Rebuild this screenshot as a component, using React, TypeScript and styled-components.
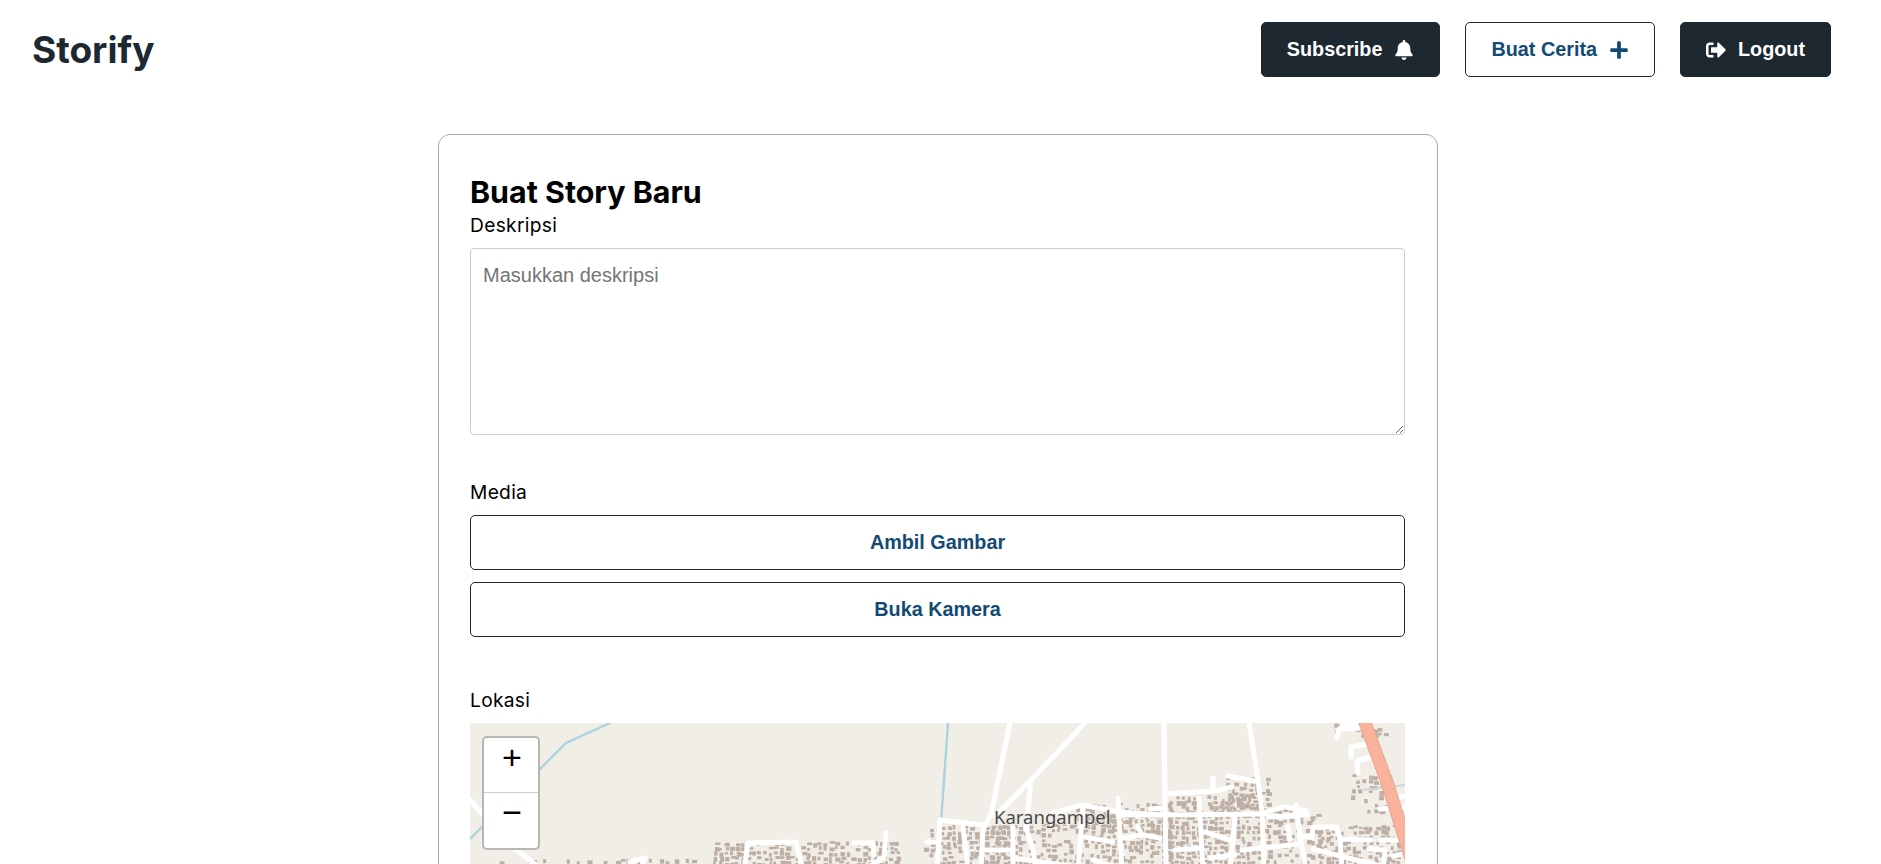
import React, { useMemo } from 'react'
import styled, { createGlobalStyle } from 'styled-components'
import { FaBell, FaPlus, FaSignOutAlt } from 'react-icons/fa'

const GlobalStyle = createGlobalStyle`
  * {
    box-sizing: border-box;
  }
  html {
    overflow: hidden;
  }
  body {
    margin: 0;
    background: #ffffff;
    color: #000000;
    font-family: Inter, "Liberation Sans", sans-serif;
  }
`

const Header = styled.header`
  display: flex;
  align-items: center;
  justify-content: space-between;
  height: 99px;
  padding: 0 50px 0 32px;
`

const Brand = styled.a`
  font-family: Inter, sans-serif;
  font-size: 37px;
  font-weight: 700;
  color: #1d2830;
  margin-top: -1px;
`

const Nav = styled.nav`
  display: flex;
  gap: 25px;
`

const Button = styled.button<{ $outline?: boolean; $block?: boolean }>`
  display: flex;
  align-items: center;
  justify-content: center;
  gap: 12px;
  height: 55px;
  width: ${p => (p.$block ? '100%' : 'auto')};
  padding: 0 25px;
  border: 1px solid #1d2830;
  border-radius: 5px;
  background: ${p => (p.$outline ? '#ffffff' : '#1d2830')};
  color: ${p => (p.$outline ? '#134a74' : '#ffffff')};
  font-family: "Liberation Sans", Arial, sans-serif;
  font-size: 19.8px;
  font-weight: 700;

  svg {
    width: auto;
    height: 20px;
  }
`

const Main = styled.main`
  display: flex;
  justify-content: center;
  padding: 35px 5px 40px 0;
`

const Card = styled.section`
  width: 1000px;
  padding: 39px 32px 40px 31px;
  border: 1px solid #aaaaaa;
  border-radius: 12px;
`

const Title = styled.h1`
  margin: 0 0 4px;
  font-size: 30.4px;
  line-height: 36px;
  font-weight: 700;
`

const Field = styled.div<{ $gap?: number }>`
  display: flex;
  flex-direction: column;
  margin-bottom: ${p => p.$gap ?? 46}px;
`

const Label = styled.label`
  font-size: 19.2px;
  letter-spacing: 0.3px;
  line-height: 22px;
  margin-bottom: 12px;
`

const Textarea = styled.textarea`
  display: block;
  width: 100%;
  height: 187px;
  padding: 15px 12px;
  border: 1px solid #cccccc;
  border-radius: 4px;
  resize: vertical;
  outline: none;
  font-family: "Liberation Sans", Arial, sans-serif;
  font-size: 20px;
  &::placeholder {
    color: #757575;
  }
`

const ButtonStack = styled.div`
  display: flex;
  flex-direction: column;
  gap: 12px;
`

const MapFrame = styled.div`
  position: relative;
  height: 400px;
  overflow: hidden;
  background: #f1eee8;
`

const MapArt = styled.svg`
  display: block;
  width: 100%;
  height: 100%;
`

const ZoomControl = styled.div`
  position: absolute;
  top: 13px;
  left: 12px;
  width: 58px;
  border: 2px solid #b9b6b1;
  border-radius: 5px;
  background: #ffffff;
  overflow: hidden;
`

const ZoomButton = styled.div<{ $last?: boolean }>`
  height: 55px;
  padding-left: 2px;
  border-bottom: ${p => (p.$last ? 'none' : '1px solid #cccccc')};
  text-align: center;
  font-family: "Liberation Mono", monospace;
  font-size: 34px;
  line-height: 44px;
  color: #000000;
`

// page position of the map's top left corner, the roads below were read off the page
const OX = 470
const OY = 723

type Zone = [number, number, number, number, number]

const zones: Zone[] = [
  [500, 860, 706, 870, 0.4],
  [714, 842, 900, 870, 0.78],
  [925, 828, 938, 870, 0.6],
  [942, 826, 1012, 870, 0.84],
  [985, 826, 1032, 870, 0.76],
  [1036, 824, 1085, 870, 0.55],
  [1075, 804, 1170, 830, 0.78],
  [1085, 815, 1170, 870, 0.84],
  [1170, 796, 1262, 870, 0.9],
  [1222, 778, 1268, 815, 0.8],
  [1262, 810, 1320, 870, 0.6],
  [1320, 826, 1400, 870, 0.84],
  [1352, 775, 1395, 815, 0.6],
  [1335, 724, 1385, 735, 0.38],
]

const roads: [number, number][][] = [
  [[470, 800], [483, 815], [514, 848], [540, 868]],
  [[1010, 723], [991, 814], [983, 830], [981, 870]],
  [[1085, 723], [1033, 778], [995, 816]],
  [[1031, 780], [1026, 828], [1033, 849], [1036, 870]],
  [[1164, 723], [1165, 800], [1166, 870]],
  [[1165, 794], [1215, 791], [1232, 787]],
  [[1213, 778], [1213, 791]],
  [[1228, 776], [1255, 781]],
  [[1249, 723], [1258, 780], [1262, 812], [1264, 870]],
  [[1118, 815], [1164, 815], [1266, 814]],
  [[1150, 809], [1164, 808]],
  [[1199, 798], [1203, 870]],
  [[1235, 817], [1230, 870]],
  [[1266, 812], [1284, 807]],
  [[1296, 805], [1300, 836], [1306, 870]],
  [[1269, 817], [1308, 815]],
  [[1286, 807], [1306, 811]],
  [[1288, 827], [1290, 840]],
  [[1242, 850], [1300, 844]],
  [[1312, 837], [1313, 827], [1337, 827], [1340, 839], [1371, 840]],
  [[1300, 836], [1312, 837]],
  [[1340, 839], [1342, 870]],
  [[1313, 849], [1340, 856], [1381, 866]],
  [[1381, 840], [1400, 840]],
  [[1369, 849], [1385, 850], [1383, 870]],
  [[1393, 856], [1408, 853]],
  [[1380, 809], [1405, 807]],
  [[1398, 798], [1408, 795]],
  [[1337, 737], [1339, 729], [1364, 728]],
  [[1343, 724], [1364, 725]],
  [[1351, 757], [1351, 747], [1368, 744]],
  [[1358, 773], [1357, 761], [1371, 757]],
  [[940, 820], [982, 825]],
  [[940, 820], [937, 870]],
  [[927, 842], [938, 842]],
  [[983, 850], [1013, 850]],
  [[1013, 827], [1013, 870]],
  [[963, 827], [968, 870]],
  [[1053, 813], [1082, 805], [1120, 812], [1160, 815]],
  [[1083, 807], [1078, 870]],
  [[1118, 798], [1120, 837], [1122, 870]],
  [[1085, 837], [1113, 842]],
  [[1123, 838], [1143, 835], [1160, 838]],
  [[1138, 827], [1142, 835]],
  [[1013, 858], [1070, 866]],
  [[1093, 860], [1113, 866]],
  [[1175, 850], [1199, 848]],
  [[1205, 832], [1230, 840]],
  [[1210, 858], [1235, 855]],
  [[749, 843], [796, 842]],
  [[748, 843], [744, 870]],
  [[796, 843], [803, 870]],
  [[854, 843], [873, 843], [874, 855]],
  [[886, 833], [884, 857], [870, 866]],
  [[630, 862], [645, 858], [640, 870]],
]

const toPoints = (line: [number, number][]) =>
  line.map(([x, y]) => `${x - OX},${y - OY}`).join(' ')

const makeBuildings = () => {
  // small fixed generator, so the houses stay put between runs
  let seed = 41
  const next = () => {
    seed = (seed * 16807) % 2147483647
    return seed / 2147483647
  }
  const out: { x: number; y: number; w: number; h: number }[] = []
  zones.forEach(([x0, y0, x1, y1, density]) => {
    for (let y = y0; y < y1; y += 5) {
      for (let x = x0; x < x1; x += 5.5) {
        if (next() < density) {
          out.push({
            x: x - OX + next() * 2.6 - 1.3,
            y: y - OY + next() * 2.6 - 1.3,
            w: 2.6 + next() * 2.8,
            h: 2.4 + next() * 2.4,
          })
        }
      }
    }
  })
  return out
}

const MapTiles = () => {
  const buildings = useMemo(makeBuildings, [])
  return (
    <MapArt viewBox="0 0 935 400" preserveAspectRatio="xMinYMin slice">
      <defs>
        <filter id="tile-blur">
          <feGaussianBlur stdDeviation="0.7" />
        </filter>
      </defs>
      <g filter="url(#tile-blur)">
        <polyline points={toPoints([[470, 839], [566, 743], [610, 723]])} fill="none" stroke="#aad3df" strokeWidth="2.4" />
        <polyline points={toPoints([[948, 723], [941, 823]])} fill="none" stroke="#aad3df" strokeWidth="2.4" />
        {buildings.map((b, i) => (
          <rect key={i} x={b.x} y={b.y} width={b.w} height={b.h} fill="#bdafa5" />
        ))}
        <polyline points={toPoints([[1361, 790], [1405, 785]])} fill="none" stroke="#d3d6d6" strokeWidth="2" />
        {roads.map((line, i) => (
          <polyline
            key={i}
            points={toPoints(line)}
            fill="none"
            stroke="#ffffff"
            strokeWidth="5"
            strokeLinejoin="round"
            strokeLinecap="round"
          />
        ))}
        <polyline points={toPoints([[1364, 720], [1388, 785], [1412, 862]])} fill="none" stroke="#e8a78f" strokeWidth="13" />
        <polyline points={toPoints([[1364, 720], [1388, 785], [1412, 862]])} fill="none" stroke="#f9b29c" strokeWidth="11" />
      </g>
      <text x={994 - OX} y={824 - OY} fontFamily="'Noto Sans', sans-serif" fontSize="18.5" fill="#4a4a4a" stroke="#f1eee8" strokeWidth="2" strokeOpacity="0.7" paintOrder="stroke">
        Karangampel
      </text>
    </MapArt>
  )
}

export default function App() {
  return (
    <>
      <GlobalStyle />
      <Header>
        <Brand>Storify</Brand>
        <Nav>
          <Button>
            Subscribe <FaBell />
          </Button>
          <Button $outline>
            Buat Cerita <FaPlus />
          </Button>
          <Button>
            <FaSignOutAlt /> Logout
          </Button>
        </Nav>
      </Header>
      <Main>
        <Card>
          <Title>Buat Story Baru</Title>
          <Field>
            <Label htmlFor="description">Deskripsi</Label>
            <Textarea id="description" placeholder="Masukkan deskripsi" />
          </Field>
          <Field $gap={52}>
            <Label>Media</Label>
            <ButtonStack>
              <Button $outline $block type="button">Ambil Gambar</Button>
              <Button $outline $block type="button">Buka Kamera</Button>
            </ButtonStack>
          </Field>
          <Field>
            <Label>Lokasi</Label>
            <MapFrame>
              <MapTiles />
              <ZoomControl>
                <ZoomButton>+</ZoomButton>
                <ZoomButton $last>−</ZoomButton>
              </ZoomControl>
            </MapFrame>
          </Field>
        </Card>
      </Main>
    </>
  )
}
